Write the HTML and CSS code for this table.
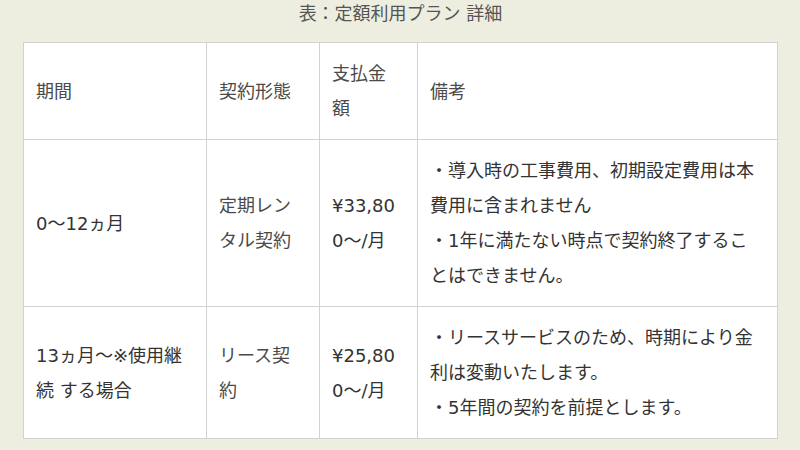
FILE: index.html
```html
<!DOCTYPE html>
<html lang="ja">
<head>
<meta charset="utf-8">
<title>定額利用プラン 詳細</title>
<link rel="stylesheet" href="styles.css">
</head>
<body>
<main class="page">
  <table class="plan-table">
    <caption class="plan-caption">表：定額利用プラン 詳細</caption>
    <colgroup>
      <col class="col-period">
      <col class="col-type">
      <col class="col-price">
      <col class="col-note">
    </colgroup>
    <thead>
      <tr>
        <th class="cell head">期間</th>
        <th class="cell head">契約形態</th>
        <th class="cell head price">支払金額</th>
        <th class="cell head">備考</th>
      </tr>
    </thead>
    <tbody>
      <tr class="row-1">
        <td class="cell">0～12ヵ月</td>
        <td class="cell type">定期レンタル契約</td>
        <td class="cell price">¥33,800～/月</td>
        <td class="cell">・導入時の工事費用、初期設定費用は本費用に含まれません<br>・1年に満たない時点で契約終了することはできません。</td>
      </tr>
      <tr class="row-2">
        <td class="cell">13ヵ月～※使用継続 する場合</td>
        <td class="cell type">リース契約</td>
        <td class="cell price">¥25,800～/月</td>
        <td class="cell">・リースサービスのため、時期により金利は変動いたします。<br>・5年間の契約を前提とします。</td>
      </tr>
    </tbody>
  </table>
</main>
</body>
</html>
```

FILE: styles.css
```css
html, body {
  margin: 0;
  padding: 0;
  background: #edeedf;
}

body {
  font-family: "DejaVu Sans", "Noto Sans CJK JP", sans-serif;
  font-size: 18px;
  color: #333;
}

.page {
  padding: 0 23px 0 23px;
}

.plan-table {
  width: 754px;
  table-layout: fixed;
  border-collapse: collapse;
  background: #fff;
  border: 1px solid #c4c4c4;
}

.plan-caption {
  caption-side: top;
  text-align: center;
  line-height: 28px;
  padding-bottom: 14px;
  color: #555;
}

.col-period { width: 183px; }
.col-type { width: 113px; }
.col-price { width: 98px; }
.col-note { width: 360px; }

.cell {
  border: 1px solid #d2d2d2;
  padding: 13px 13px 13px 12px;
  line-height: 35px;
  text-align: left;
  font-weight: normal;
  vertical-align: middle;
  word-break: break-all;
}

.head {
  color: #4a4a4a;
}

.type {
  color: #4a4a4a;
  padding-right: 14px;
}

.price {
  padding-right: 17px;
}
```
